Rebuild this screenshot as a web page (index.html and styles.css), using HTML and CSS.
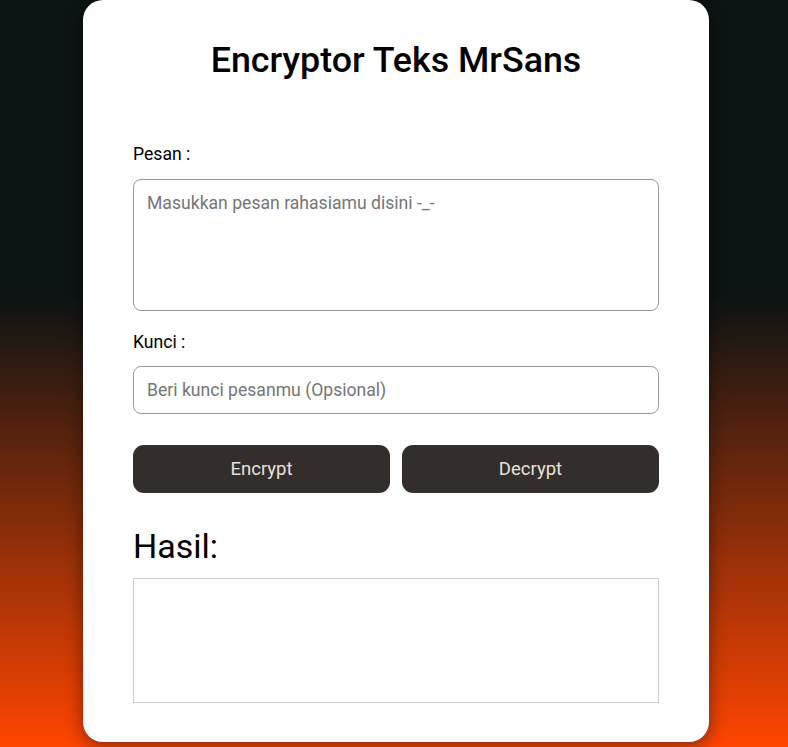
FILE: index.html
```html
<!DOCTYPE html>
<html lang="id">
<head>
<meta charset="utf-8">
<title>Encryptor Teks MrSans</title>
<link rel="stylesheet" href="styles.css">
</head>
<body>
<main class="card">
  <h1 class="title">Encryptor Teks MrSans</h1>
  <label class="label label-pesan" for="pesan">Pesan :</label>
  <textarea id="pesan" class="field field-area" placeholder="Masukkan pesan rahasiamu disini -_-"></textarea>
  <label class="label label-kunci" for="kunci">Kunci :</label>
  <input id="kunci" class="field field-input" type="text" placeholder="Beri kunci pesanmu (Opsional)">
  <div class="actions">
    <button class="btn" type="button">Encrypt</button>
    <button class="btn" type="button">Decrypt</button>
  </div>
  <h2 class="result-title">Hasil:</h2>
  <div class="result"></div>
</main>
</body>
</html>
```

FILE: styles.css
```css
* { box-sizing: border-box; }
html, body { height: 100%; }
body {
  margin: 0;
  padding: 0 0 0 4px;
  min-height: 100vh;
  background: linear-gradient(to bottom, #0d1414 0%, #0d1414 40%, #ff4500 100%);
  font-family: Roboto, "Liberation Sans", Arial, sans-serif;
  overflow: hidden;
}
.card {
  width: 626px;
  margin: 0 auto;
  background: #fff;
  border-radius: 20px;
  padding: 40px 50px 39px;
  box-shadow: 0 4px 18px rgba(0, 0, 0, 0.45);
  display: flex;
  flex-direction: column;
}
.title {
  margin: 0 0 64px;
  font-size: 35.8px;
  font-weight: 500;
  line-height: 41px;
  text-align: center;
  color: #000;
}
.label {
  display: block;
  font-size: 17.6px;
  line-height: 19px;
  color: #000;
}
.label-pesan { margin-bottom: 15px; }
.label-kunci { margin-top: 22px; margin-bottom: 14px; }
.field {
  width: 100%;
  border: 1px solid #999;
  border-radius: 8px;
  font-family: Roboto, "Liberation Sans", Arial, sans-serif;
  font-size: 17.6px;
  color: #000;
  background: #fff;
  outline: none;
}
.field::placeholder { color: #757575; }
.field-area {
  height: 132px;
  padding: 12px 13px;
  resize: none;
  line-height: 22px;
  display: block;
}
.field-input {
  height: 48px;
  padding: 0 13px;
}
.actions {
  display: flex;
  gap: 12px;
  margin-top: 31px;
}
.btn {
  flex: 1;
  height: 48px;
  border: none;
  border-radius: 11px;
  background: #332e2c;
  color: #e6e2de;
  font-family: Roboto, "Liberation Sans", Arial, sans-serif;
  font-size: 18.5px;
}
.result-title {
  margin: 33px 0 12px;
  font-size: 34px;
  font-weight: 400;
  line-height: 40px;
  color: #000;
}
.result {
  height: 125px;
  border: 1px solid #ccc;
}
```
